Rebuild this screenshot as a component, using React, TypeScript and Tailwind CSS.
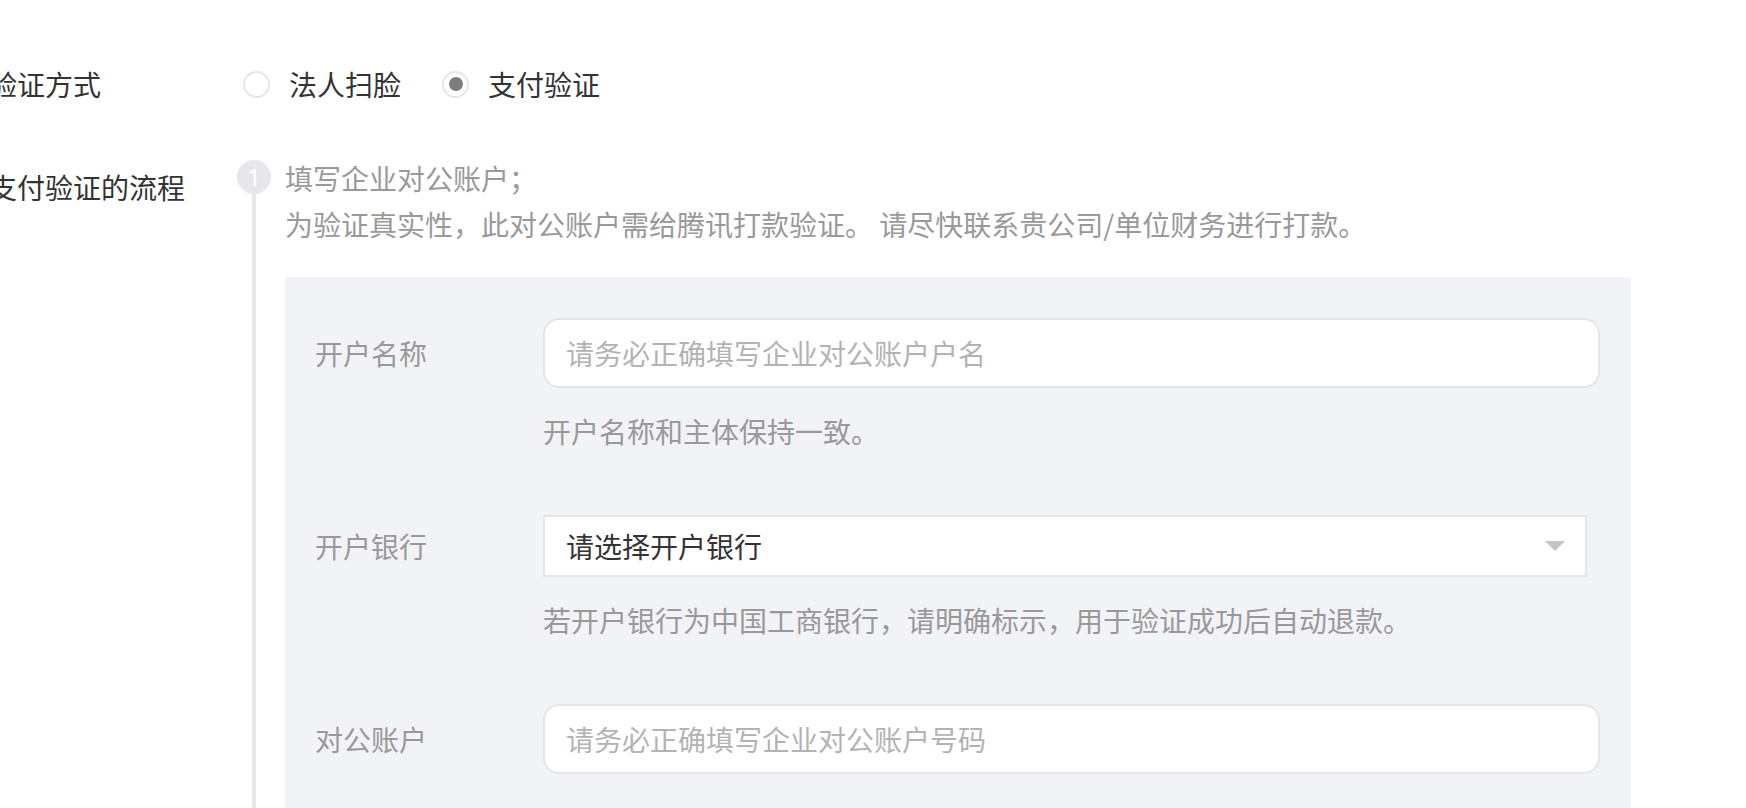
import React from "react";

function Radio({ checked, label }: { checked?: boolean; label: string }) {
  return (
    <div className="flex items-center gap-[19px]">
      <div className="w-[27px] h-[27px] rounded-full border-2 border-[#e6e6e6] bg-white flex items-center justify-center">
        {checked ? <div className="w-[14px] h-[14px] rounded-full bg-[#7c7c7c]" /> : null}
      </div>
      <span className="text-[28px] leading-[40px] text-[#333]">{label}</span>
    </div>
  );
}

function FieldRow({ label, children }: { label: string; children: React.ReactNode }) {
  return (
    <div className="flex items-center">
      <div className="w-[228px] shrink-0 text-[28px] leading-[40px] text-[#999]">{label}</div>
      {children}
    </div>
  );
}

export default function App() {
  return (
    <div className="w-full h-[808px] overflow-hidden bg-white font-['Noto_Sans_CJK_SC','Noto_Sans',sans-serif]">
      {/* 验证方式 */}
      <div className="flex items-center h-[40px] mt-[64px]">
        <div className="w-[238px] shrink-0">
          <div className="-ml-[11px] text-[28px] leading-[40px] text-[#333]">验证方式</div>
        </div>
        <div className="flex items-center gap-[41px] ml-[5px]">
          <Radio label="法人扫脸" />
          <Radio checked label="支付验证" />
        </div>
      </div>

      {/* 支付验证的流程 */}
      <div className="flex mt-[51px]">
        <div className="w-[237px] shrink-0">
          <div className="-ml-[11px] mt-[9px] text-[28px] leading-[46px] text-[#333] whitespace-nowrap">支付验证的流程</div>
        </div>
        <div className="w-[48px] shrink-0 flex flex-col">
          <div className="mt-[5px] w-[34px] h-[34px] rounded-full bg-[#e6e6eb] text-white flex items-center justify-center text-[24px] leading-none font-['Noto_Sans',sans-serif]">
            1
          </div>
          <div className="ml-[15px] w-[4px] flex-1 bg-[#e6e6eb]" />
        </div>
        <div className="w-[1346px] shrink-0">
          <div className="text-[28px] leading-[46px] text-[#999] whitespace-nowrap">填写企业对公账户；</div>
          <div className="text-[28px] leading-[46px] text-[#999] whitespace-nowrap">
            为验证真实性，此对公账户需给腾讯打款验证。 请尽快联系贵公司/单位财务进行打款。
          </div>
          <div className="mt-[30px] bg-[#f2f3f7] pl-[30px] pr-[31px] pt-[41px] pb-[80px]">
            <FieldRow label="开户名称">
              <input
                readOnly
                placeholder="请务必正确填写企业对公账户户名"
                className="w-[1057px] h-[70px] rounded-[16px] border-2 border-[#e5e5e8] bg-white px-[21px] text-[28px] text-[#333] placeholder:text-[#b3b3b3] outline-none"
              />
            </FieldRow>
            <div className="ml-[228px] mt-[20px] text-[28px] leading-[46px] text-[#999] whitespace-nowrap">
              开户名称和主体保持一致。
            </div>

            <div className="mt-[61px]">
              <FieldRow label="开户银行">
                <div className="w-[1044px] h-[62px] border-2 border-[#e5e6ea] bg-white pl-[21px] pr-[20px] flex items-center justify-between">
                  <span className="text-[28px] leading-[40px] text-[#333]">请选择开户银行</span>
                  <svg width="20" height="10" viewBox="0 0 20 10">
                    <polygon points="0,0 20,0 10,10" fill="#c4c4c4" />
                  </svg>
                </div>
              </FieldRow>
            </div>
            <div className="ml-[228px] mt-[20px] text-[28px] leading-[46px] text-[#999] whitespace-nowrap">
              若开户银行为中国工商银行，请明确标示，用于验证成功后自动退款。
            </div>

            <div className="mt-[61px]">
              <FieldRow label="对公账户">
                <input
                  readOnly
                  placeholder="请务必正确填写企业对公账户号码"
                  className="w-[1057px] h-[70px] rounded-[16px] border-2 border-[#e5e5e8] bg-white px-[21px] text-[28px] text-[#333] placeholder:text-[#b3b3b3] outline-none"
                />
              </FieldRow>
            </div>
          </div>
        </div>
      </div>
    </div>
  );
}
